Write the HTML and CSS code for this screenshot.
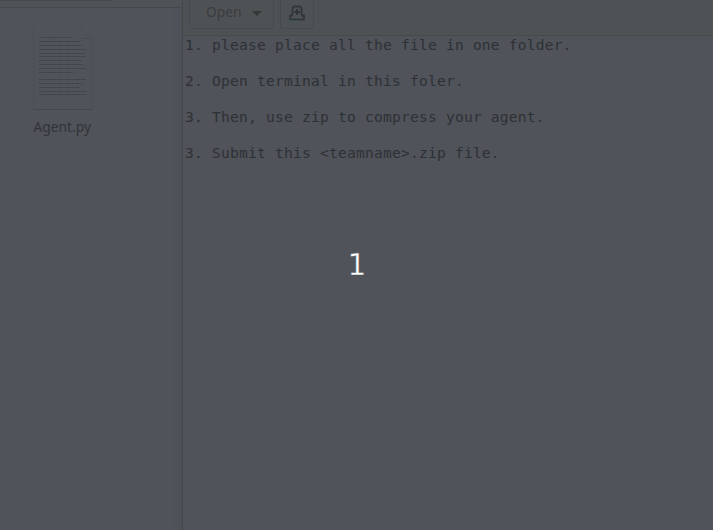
FILE: index.html
```html
<!DOCTYPE html>
<html lang="en">
<head>
<meta charset="utf-8">
<title>Desktop</title>
<link rel="stylesheet" href="styles.css">
</head>
<body>
<div class="desktop">
  <section class="files">
    <div class="files-bar"></div>
    <div class="file">
      <svg class="file-icon" width="62" height="84" viewBox="0 0 62 84" fill="none">
        <path d="M1.500 .5V83M60.500 14V83" stroke="#4b4e52"/>
        <path d="M48 1.500L60 13M48 12.500H59" stroke="#484b4f" stroke-dasharray="2 1"/>
        <path class="page-shadow" d="M1 83.500H60.500"/>
        <path class="lines" d="M7 11.500H40M7 15.500H48M7 19.500H50M7 23.500H54M7 27.500H53M7 30.500H54M7 34.500H49M7 38.500H51M7 42.500H54M7 46.500H41M7 53.500H54M7 57.500H51M7 61.500H47M7 65.500H54M7 68.500H54"/>
      </svg>
      <span class="file-name">Agent.py</span>
    </div>
  </section>
  <section class="editor">
    <header class="toolbar">
      <button class="button open"><span class="open-label">Open</span><i class="caret"></i></button>
      <button class="button new">
        <svg width="18" height="18" viewBox="0 0 18 18" fill="none">
          <path d="M4.500 11V4L6 2.500H12L13.500 4V11M5 11.500H2V15.500H16V11.500H13" stroke="#333639" stroke-width="1.800"/>
          <path d="M9 5V11M6 8H12" stroke="#333639" stroke-width="2"/>
          <path d="M1 17H13" stroke="#34586b" stroke-dasharray="2 1"/>
        </svg>
      </button>
    </header>
    <pre class="text">1. please place all the file in one folder.

2. Open terminal in this foler.

3. Then, use zip to compress your agent.

3. Submit this &lt;teamname&gt;.zip file.</pre>
  </section>
  <div class="countdown">1</div>
</div>
</body>
</html>
```

FILE: styles.css
```css
* { box-sizing: border-box; }
body { margin: 0; background: #50535a; overflow: hidden; }
.desktop { position: relative; display: flex; width: 713px; height: 530px; }
.files { width: 183px; border-right: 1px solid #43474a; background: linear-gradient(90deg, transparent 172px, #4d5056 182px); }
.files-bar { height: 8px; background: linear-gradient(#46494b 0 1px, transparent 1px) 0 0 / 112px 1px no-repeat, #505356; border-bottom: 1px solid #434849; }
.file { display: flex; flex-direction: column; align-items: center; width: 125px; padding-top: 18px; }
.file-icon { display: block; }
.page-shadow { stroke: #45494a; stroke-width: 1; }
.lines { stroke: #424547; stroke-width: 1; stroke-dasharray: 5 .5 3 .5; }
.file-name { margin-top: 6px; font: 15px/20px "Noto Sans", sans-serif; transform: scaleX(.92); color: #303337; }
.editor { flex: 1; }
.toolbar { display: flex; gap: 6px; height: 36px; padding-left: 6px; background: #4f5255; border-bottom: 1px solid #45494a; }
.button { display: flex; align-items: center; height: 29px; padding: 0; background: none; border: 1px solid #484b4d; border-top: 0; border-radius: 0 0 3px 3px; font: 15px/20px "Noto Sans", sans-serif; color: #3a3d3f; }
.open { width: 85px; padding: 0 11px 4px 16px; justify-content: space-between; }
.open-label { transform: scaleX(.92); transform-origin: left; margin-top: -2px; }
.new { width: 34px; justify-content: center; padding-bottom: 2px; }
.caret { border: 5px solid transparent; border-top-color: #353839; border-bottom: 0; margin-top: 2px; }
.text { margin: 0; padding: 0 0 0 2px; font: 14.6px/18px "DejaVu Sans Mono", monospace; letter-spacing: .21px; color: #2e3134; }
.countdown { position: absolute; inset: 0; display: flex; align-items: center; justify-content: center; padding-left: 1px; font: 29.5px/34px "DejaVu Sans", sans-serif; color: #fff; -webkit-text-stroke: .4px #50535a; }
```
